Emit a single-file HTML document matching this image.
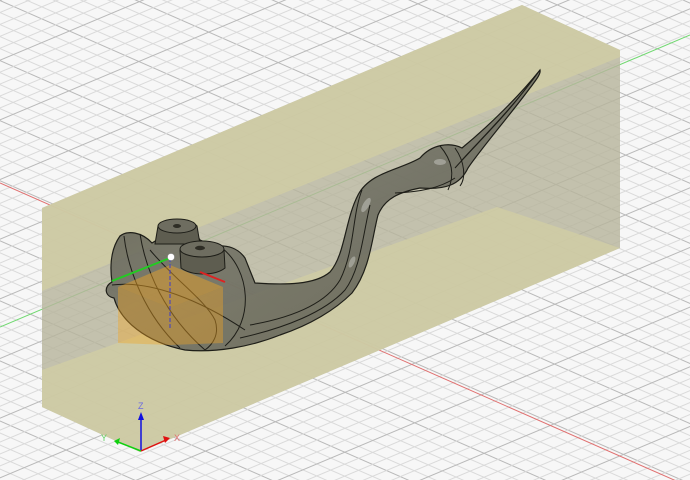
<!DOCTYPE html>
<html><head><meta charset="utf-8"><style>
html,body{margin:0;padding:0;background:#f6f6f6;}
svg{display:block;}
</style></head><body>
<svg width="690" height="480" viewBox="0 0 690 480" xmlns="http://www.w3.org/2000/svg">
<defs>
<pattern id="ga" width="1000" height="55" patternUnits="userSpaceOnUse" patternTransform="rotate(23.7)">
<line x1="0" y1="0.5" x2="1000" y2="0.5" stroke="#b9b9b9" stroke-width="1"/>
<line x1="0" y1="11.5" x2="1000" y2="11.5" stroke="#dadada" stroke-width="1"/>
<line x1="0" y1="22.5" x2="1000" y2="22.5" stroke="#dadada" stroke-width="1"/>
<line x1="0" y1="33.5" x2="1000" y2="33.5" stroke="#dadada" stroke-width="1"/>
<line x1="0" y1="44.5" x2="1000" y2="44.5" stroke="#dadada" stroke-width="1"/>
</pattern>
<pattern id="gb" width="1000" height="55" patternUnits="userSpaceOnUse" patternTransform="rotate(-22.8)">
<line x1="0" y1="0.5" x2="1000" y2="0.5" stroke="#b9b9b9" stroke-width="1"/>
<line x1="0" y1="11.5" x2="1000" y2="11.5" stroke="#dadada" stroke-width="1"/>
<line x1="0" y1="22.5" x2="1000" y2="22.5" stroke="#dadada" stroke-width="1"/>
<line x1="0" y1="33.5" x2="1000" y2="33.5" stroke="#dadada" stroke-width="1"/>
<line x1="0" y1="44.5" x2="1000" y2="44.5" stroke="#dadada" stroke-width="1"/>
</pattern>
<linearGradient id="body" x1="0" y1="0" x2="1" y2="1">
<stop offset="0" stop-color="#54534a"/>
<stop offset="0.45" stop-color="#707063"/>
<stop offset="1" stop-color="#5c5b50"/>
</linearGradient>
</defs>
<rect width="690" height="480" fill="#f7f7f7"/>
<rect width="690" height="480" fill="url(#ga)"/>
<rect width="690" height="480" fill="url(#gb)"/>
<line x1="0" y1="183" x2="690" y2="487" stroke="#e07070" stroke-width="1"/>
<line x1="0" y1="327" x2="690" y2="35" stroke="#70d870" stroke-width="1"/>
<polygon points="42,208 522,5 620,50 620,248 140,452 42,407" fill="#b7b59c" fill-opacity="0.82"/>
<polygon points="42,208 522,5 620,50 620,57 42,291" fill="#d0cda5" fill-opacity="0.85"/>
<polygon points="42,370 497,207 620,248 140,452 42,407" fill="#d0cda5" fill-opacity="0.85"/>
<path d="M540,70 C520,95 490,125 462,148 C450,142 432,144 420,158 C400,170 370,172 358,195 C345,220 345,255 330,272 C315,285 285,285 255,283 L245,258 C238,248 228,245 215,246 L200,240 C195,230 165,228 160,238 L152,243 C142,232 128,230 120,236 C110,250 110,268 112,282 C104,286 104,296 114,298 C120,320 145,342 185,350 C215,353 250,347 280,335 C310,325 335,310 352,293 C370,270 372,238 378,215 C385,198 400,192 420,188 C445,190 460,185 468,168 C480,150 510,115 530,88 C536,80 541,74 540,70 Z" fill="url(#body)" fill-opacity="0.88" stroke="#1e1e18" stroke-width="1.2"/>
<g fill="#ffffff" opacity="0.3">
<ellipse cx="366" cy="205" rx="3" ry="8" transform="rotate(30 366 205)"/>
<ellipse cx="352" cy="262" rx="2.5" ry="6" transform="rotate(25 352 262)"/>
<ellipse cx="440" cy="162" rx="6" ry="3"/>
</g>
<g fill="none" stroke="#1e1e18" stroke-width="1">
<path d="M540,70 C515,105 485,135 462,160"/>
<path d="M535,76 C510,112 480,140 455,168"/>
<path d="M440,146 C452,160 455,175 448,190"/>
<path d="M455,148 C465,162 466,178 460,186"/>
<path d="M362,190 C352,215 355,250 340,280 C325,305 290,318 250,325"/>
<path d="M370,205 C362,240 360,270 345,290 C325,312 285,328 240,338"/>
<path d="M124,236 C128,270 145,315 180,348"/>
<path d="M140,234 C146,272 165,315 205,350"/>
<path d="M150,250 C175,280 205,300 215,320 C220,335 212,345 205,350"/>
<path d="M222,248 C250,270 255,320 225,346"/>
<path d="M112,285 C150,280 200,300 245,330"/>
<path d="M395,193 C420,192 440,188 455,178"/>
</g>
<path d="M155,244 L158,226 C165,218 190,218 197,226 L200,244 Z" fill="#5e5d50" stroke="#1e1e18"/>
<ellipse cx="177" cy="226" rx="19" ry="7" fill="#6e6d60" stroke="#1e1e18"/>
<ellipse cx="177" cy="226" rx="4" ry="2" fill="#2e2d25"/>
<path d="M181,268 L180,250 C188,240 218,240 224,250 L225,268 C215,276 192,276 181,268 Z" fill="#5e5d50" stroke="#1e1e18"/>
<ellipse cx="202" cy="249" rx="22" ry="8" fill="#6e6d60" stroke="#1e1e18"/>
<ellipse cx="200" cy="248" rx="5" ry="2.2" fill="#2e2d25"/>
<polygon points="118,287 170,265 223,287 170,308" fill="#f2a422" fill-opacity="0.45"/>
<polygon points="118,287 170,308 170,345 118,343" fill="#f2a422" fill-opacity="0.4"/>
<polygon points="170,308 223,287 223,343 170,345" fill="#f2a422" fill-opacity="0.4"/>
<line x1="170" y1="258" x2="170" y2="330" stroke="#3c3ccc" stroke-width="1" stroke-dasharray="4,2"/>
<line x1="112" y1="281" x2="170" y2="258" stroke="#22cc22" stroke-width="2"/>
<line x1="200" y1="272" x2="225" y2="282" stroke="#dd2222" stroke-width="2"/>
<circle cx="171" cy="257" r="3.5" fill="#ffffff" stroke="#888" stroke-width="0.5"/>
<line x1="141" y1="451" x2="141" y2="418" stroke="#1010e0" stroke-width="1.5"/>
<polygon points="138,420 144,420 141,412" fill="#1010e0"/>
<line x1="141" y1="451" x2="166" y2="440" stroke="#e01010" stroke-width="1.5"/>
<polygon points="163,436 170,438 165,443" fill="#e01010"/>
<line x1="141" y1="451" x2="118" y2="442" stroke="#10d010" stroke-width="1.5"/>
<polygon points="120,438 114,441 118,445" fill="#10d010"/>
<text x="138" y="409" font-family="Liberation Sans, sans-serif" font-size="9" fill="#6a6ae0">Z</text>
<text x="174" y="441" font-family="Liberation Sans, sans-serif" font-size="9" fill="#e07070">X</text>
<text x="101" y="441" font-family="Liberation Sans, sans-serif" font-size="9" fill="#60d060">Y</text>
</svg>
</body></html>
